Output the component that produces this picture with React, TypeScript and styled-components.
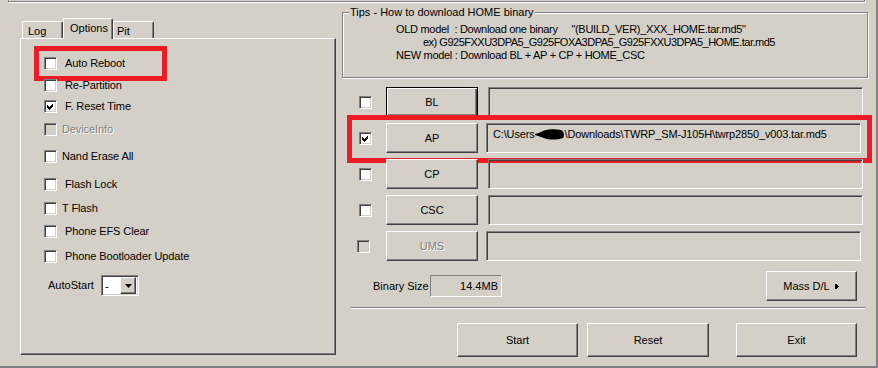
import React from 'react';
import styled, { createGlobalStyle, css } from 'styled-components';

const face = '#d4d0c8';
const shadow = '#808080';
const dark = '#404040';
const marker = '#ed1c24';

const GlobalStyle = createGlobalStyle`
  body {
    margin: 0;
    background: ${face};
    font-family: "Liberation Sans", Arial, sans-serif;
    font-size: 11px;
    color: #000;
  }
`;

const sunken = css`
  box-sizing: border-box;
  border-style: solid;
  border-width: 1px;
  border-color: ${shadow} #fff #fff ${shadow};
  box-shadow: inset 1px 1px 0 ${dark}, inset -1px -1px 0 ${face};
`;

const raised = css`
  box-sizing: border-box;
  border-style: solid;
  border-width: 1px;
  border-color: #fff ${dark} ${dark} #fff;
  box-shadow: inset -1px -1px 0 ${shadow};
`;

const etched = css`
  border: 1px solid ${shadow};
  box-shadow: inset 1px 1px 0 #fff, 1px 1px 0 #fff;
`;

const Window = styled.div`
  width: 878px;
  height: 368px;
  box-sizing: border-box;
  background: ${face};
  border-right: 2px solid ${shadow};
  border-bottom: 2px solid ${shadow};
  display: flex;
  flex-direction: column;
  overflow: hidden;
`;

const TopFrame = styled.div`
  margin-left: 8px;
  width: 857px;
  height: 2px;
  box-sizing: border-box;
  border: 1px solid ${shadow};
  border-top: none;
  box-shadow: 1px 1px 0 #fff, inset 1px 0 0 #fff;
`;

const Body = styled.div`
  display: flex;
  flex: 1;
`;

const LeftCol = styled.div`
  width: 316px;
  padding: 16px 0 0 20px;
  display: flex;
  flex-direction: column;
`;

const TabRow = styled.div`
  display: flex;
  align-items: flex-end;
  height: 20px;
  padding-left: 2px;
`;

const Tab = styled.div<{ $active?: boolean; $w: number; $pad: number }>`
  width: ${(p) => p.$w}px;
  height: 17px;
  box-sizing: border-box;
  padding: 3px 0 0 ${(p) => p.$pad}px;
  line-height: 13px;
  border-top: 1px solid #fff;
  border-left: 1px solid #fff;
  border-right: 1px solid ${dark};
  border-radius: 2px 2px 0 0;
  box-shadow: inset -1px 0 0 ${shadow};
  background: ${face};

  ${(p) =>
    p.$active &&
    css`
      height: 21px;
      margin-bottom: -1px;
      position: relative;
      z-index: 1;
    `}
`;

const Panel = styled.div`
  height: 317px;
  box-sizing: border-box;
  border-top: 1px solid #fff;
  border-left: 1px solid #fff;
  border-right: 1px solid ${dark};
  border-bottom: 1px solid ${dark};
  box-shadow: inset -1px -1px 0 ${shadow};
  padding: 16px 0 0 23px;
  display: flex;
  flex-direction: column;
`;

const OptionRow = styled.div<{ $gap: number }>`
  position: relative;
  display: flex;
  align-items: center;
  height: 16px;
  margin-top: ${(p) => p.$gap}px;
`;

const Box = styled.span<{ $disabled?: boolean }>`
  ${sunken};
  width: 13px;
  height: 13px;
  flex: none;
  background: ${(p) => (p.$disabled ? face : '#fff')};
  display: flex;
  align-items: center;
  justify-content: center;
`;

const Label = styled.span<{ $pad?: number; $disabled?: boolean }>`
  margin-left: ${(p) => p.$pad ?? 0}px;
  line-height: 13px;
  white-space: nowrap;
  letter-spacing: -0.1px;
  ${(p) =>
    p.$disabled &&
    css`
      color: ${shadow};
      text-shadow: 1px 1px 0 #fff;
    `}
`;

const Highlight = styled.div<{ $l: number; $t: number; $w: number; $h: number }>`
  position: absolute;
  left: ${(p) => p.$l}px;
  top: ${(p) => p.$t}px;
  width: ${(p) => p.$w}px;
  height: ${(p) => p.$h}px;
  box-sizing: border-box;
  border: 5px solid ${marker};
  pointer-events: none;
`;

const AutoStartRow = styled.div`
  display: flex;
  align-items: center;
  height: 21px;
  margin-top: 11px;
  padding-left: 4px;
`;

const AutoLabel = styled.span`
  width: 53px;
  line-height: 13px;
`;

const Select = styled.div`
  ${sunken};
  width: 38px;
  height: 21px;
  background: #fff;
  display: flex;
  align-items: center;
  padding: 2px 2px 2px 3px;
  justify-content: space-between;
`;

const SelectArrow = styled.span`
  ${raised};
  width: 16px;
  height: 17px;
  background: ${face};
  display: flex;
  align-items: center;
  justify-content: center;
`;

const RightCol = styled.div`
  width: 526px;
  margin-left: 6px;
  padding-top: 10px;
  display: flex;
  flex-direction: column;
`;

const Group = styled.div`
  position: relative;
  height: 66px;
  box-sizing: border-box;
  ${etched};
  padding: 10px 0 0 53px;
`;

const GroupTitle = styled.span`
  position: absolute;
  top: -7px;
  left: 6px;
  padding: 0 1px;
  background: ${face};
  line-height: 13px;
`;

const TipLine = styled.div<{ $indent?: number; $tight?: number }>`
  white-space: pre;
  line-height: 13px;
  margin-left: ${(p) => p.$indent ?? 0}px;
  letter-spacing: ${(p) => p.$tight ?? -0.3}px;
`;

const FileRows = styled.div`
  display: flex;
  flex-direction: column;
  gap: 6px;
  margin-top: 9px;
`;

const FileRow = styled.div`
  position: relative;
  display: grid;
  grid-template-columns: 44px 92px 1fr;
  align-items: center;
  height: 30px;
`;

const BoxCell = styled.div<{ $shift?: boolean }>`
  display: flex;
  padding-left: ${(p) => (p.$shift ? 15 : 17)}px;
`;

const Button = styled.div<{ $default?: boolean; $disabled?: boolean; $w?: number; $h?: number; $ml?: number }>`
  ${raised};
  width: ${(p) => (p.$w ? `${p.$w}px` : 'auto')};
  height: ${(p) => p.$h ?? 30}px;
  margin-left: ${(p) => p.$ml ?? 0}px;
  background: ${face};
  display: flex;
  align-items: center;
  justify-content: center;
  gap: 5px;
  line-height: 13px;

  ${(p) =>
    p.$default &&
    css`
      border: 1px solid #000;
      box-shadow: inset 1px 1px 0 #fff, inset -1px -1px 0 ${dark}, inset -2px -2px 0 ${shadow};
    `}

  ${(p) =>
    p.$disabled &&
    css`
      color: ${shadow};
      text-shadow: 1px 1px 0 #fff;
    `}
`;

const PathField = styled.div<{ $shift?: boolean }>`
  ${sunken};
  height: 30px;
  margin: 0 ${(p) => (p.$shift ? 7 : 5)}px 0 ${(p) => (p.$shift ? 8 : 10)}px;
  padding: 4px 6px;
  line-height: 13px;
  white-space: pre;
  letter-spacing: -0.15px;
  display: flex;
  align-items: flex-start;
`;

const BinaryRow = styled.div`
  display: flex;
  align-items: center;
  height: 30px;
  margin-top: 10px;
  padding-left: 31px;
`;

const BinaryLabel = styled.span`
  width: 57px;
  line-height: 13px;
`;

const SizeField = styled.div`
  ${sunken};
  box-shadow: none;
  width: 72px;
  height: 22px;
  padding: 0 3px;
  display: flex;
  align-items: center;
  justify-content: flex-end;
`;

const Separator = styled.div`
  margin: 6px 3px 0 9px;
  border-top: 1px solid ${shadow};
  border-bottom: 1px solid #fff;
`;

const ActionRow = styled.div`
  display: flex;
  margin-top: 14px;
  padding-left: 115px;
`;

const Check = () => (
  <svg width="7" height="7" viewBox="0 0 7 7" shapeRendering="crispEdges">
    <polygon points="0,2 2,4 6,0 6,3 2,7 0,5" fill="#000" />
  </svg>
);

const Scribble = () => (
  <svg width="30" height="13" viewBox="0 0 30 13">
    <path d="M0 6 C4 5 6 4 8 3 C12 1 20 1 26 2 C29 3 30 8 28 10 C22 12 14 12 9 10 C6 9 3 8 0 7 Z" fill="#000" />
  </svg>
);

const options = [
  { label: 'Auto Reboot', gap: 0, pad: 8, highlight: true },
  { label: 'Re-Partition', gap: 6, pad: 8 },
  { label: 'F. Reset Time', gap: 5, pad: 8, checked: true },
  { label: 'DeviceInfo', gap: 7, pad: 5, disabled: true },
  { label: 'Nand Erase All', gap: 11, pad: 5 },
  { label: 'Flash Lock', gap: 12, pad: 8 },
  { label: 'T Flash', gap: 8, pad: 5 },
  { label: 'Phone EFS Clear', gap: 7, pad: 8 },
  { label: 'Phone Bootloader Update', gap: 9, pad: 8 },
];

const files = [
  { name: 'BL', isDefault: true },
  { name: 'AP', checked: true, highlight: true, shiftField: true },
  { name: 'CP' },
  { name: 'CSC' },
  { name: 'UMS', disabled: true, shiftBox: true, shiftField: true },
];

const App = () => {
  return (
    <>
      <GlobalStyle />
      <Window>
        <TopFrame />
        <Body>
          <LeftCol>
            <TabRow>
              <Tab $w={41} $pad={5}>Log</Tab>
              <Tab $w={50} $pad={6} $active>
                Options
              </Tab>
              <Tab $w={41} $pad={3}>Pit</Tab>
            </TabRow>
            <Panel>
              {options.map((o) => (
                <OptionRow key={o.label} $gap={o.gap}>
                  <Box $disabled={o.disabled}>{o.checked && <Check />}</Box>
                  <Label $pad={o.pad} $disabled={o.disabled}>
                    {o.label}
                  </Label>
                  {o.highlight && <Highlight $l={-10} $t={-9} $w={133} $h={35} />}
                </OptionRow>
              ))}
              <AutoStartRow>
                <AutoLabel>AutoStart</AutoLabel>
                <Select>
                  <span>-</span>
                  <SelectArrow>
                    <svg width="7" height="4" viewBox="0 0 7 4">
                      <polygon points="0,0 7,0 3.5,4" fill="#000" />
                    </svg>
                  </SelectArrow>
                </Select>
              </AutoStartRow>
            </Panel>
          </LeftCol>

          <RightCol>
            <Group>
              <GroupTitle>Tips - How to download HOME binary</GroupTitle>
              <TipLine>{'OLD model  : Download one binary     "(BUILD_VER)_XXX_HOME.tar.md5"'}</TipLine>
              <TipLine $indent={27} $tight={-0.5}>
                ex) G925FXXU3DPA5_G925FOXA3DPA5_G925FXXU3DPA5_HOME.tar.md5
              </TipLine>
              <TipLine>NEW model : Download BL + AP + CP + HOME_CSC</TipLine>
            </Group>

            <FileRows>
              {files.map((f) => (
                <FileRow key={f.name}>
                  <BoxCell $shift={f.shiftBox}>
                    <Box $disabled={f.disabled}>{f.checked && <Check />}</Box>
                  </BoxCell>
                  <Button $default={f.isDefault} $disabled={f.disabled}>
                    {f.name}
                  </Button>
                  <PathField $shift={f.shiftField}>
                    {f.name === 'AP' && (
                      <>
                        {'C:\\Users'}
                        <Scribble />
                        {'\\Downloads\\TWRP_SM-J105H\\twrp2850_v003.tar.md5'}
                      </>
                    )}
                  </PathField>
                  {f.highlight && <Highlight $l={5} $t={-8} $w={525} $h={48} />}
                </FileRow>
              ))}
            </FileRows>

            <BinaryRow>
              <BinaryLabel>Binary Size</BinaryLabel>
              <SizeField>14.4MB</SizeField>
              <Button $w={91} $ml={264}>
                Mass D/L
                <svg width="5" height="7" viewBox="0 0 5 7" shapeRendering="crispEdges">
                  <rect x="0" y="1" width="1" height="5" fill="#000" />
                  <polygon points="1,1 4,3.5 1,6" fill="#000" />
                </svg>
              </Button>
            </BinaryRow>

            <Separator />

            <ActionRow>
              <Button $w={121} $h={34}>Start</Button>
              <Button $w={122} $h={34} $ml={9}>
                Reset
              </Button>
              <Button $w={121} $h={34} $ml={27}>
                Exit
              </Button>
            </ActionRow>
          </RightCol>
        </Body>
      </Window>
    </>
  );
};

export default App;
